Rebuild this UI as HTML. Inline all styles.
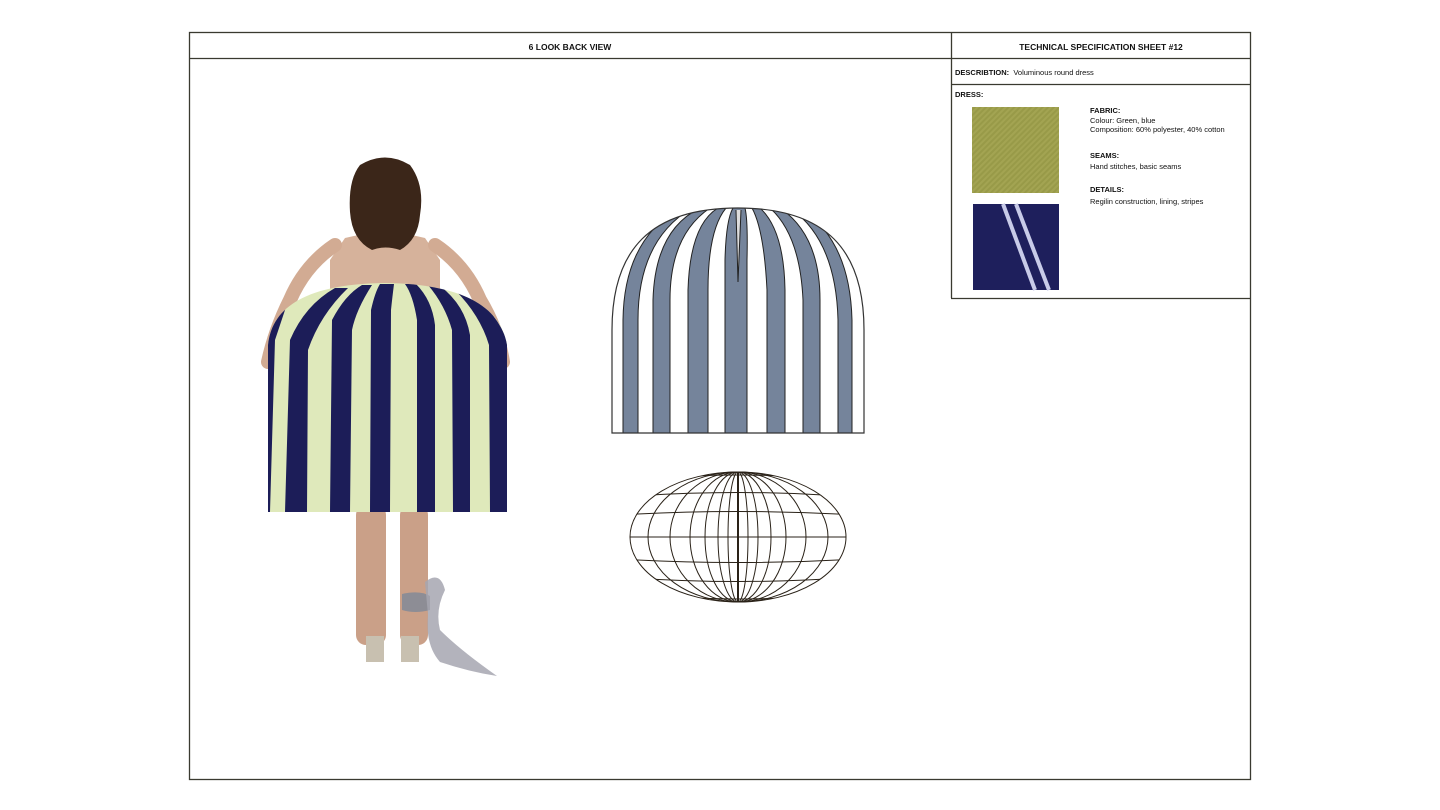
<!DOCTYPE html>
<html><head><meta charset="utf-8"><style>
html,body{margin:0;padding:0;background:#fff;width:1440px;height:810px;overflow:hidden;font-family:"Liberation Sans",Arial,sans-serif;}
.t{position:absolute;font-size:8px;color:#111;white-space:nowrap;line-height:10px}
.b{font-weight:bold}
</style></head><body>
<svg width="1440" height="810" style="position:absolute;left:0;top:0" xmlns="http://www.w3.org/2000/svg">
<defs>
<clipPath id="dome"><path d="M612,433 L612,330 C612,250 650,208 738,208 C826,208 864,250 864,330 L864,433 Z"/></clipPath>
<clipPath id="skirt"><path d="M268,512 L268,345 C272,305 310,284 385,283 C460,284 500,305 507,345 L507,512 Z"/></clipPath>
<clipPath id="ell"><ellipse cx="738" cy="537" rx="108" ry="65"/></clipPath>
<pattern id="twill" width="4" height="4" patternUnits="userSpaceOnUse" patternTransform="rotate(45)"><rect width="4" height="4" fill="#a3a452"/><rect width="2" height="4" fill="#989a48"/></pattern>
</defs>
<g fill="none" stroke="#3a3a30" stroke-width="1.3">
<rect x="189.5" y="32.5" width="1061" height="747"/>
<line x1="189" y1="58.5" x2="1251" y2="58.5"/>
<line x1="951.5" y1="32" x2="951.5" y2="298"/>
<line x1="951" y1="84.5" x2="1251" y2="84.5"/>
<line x1="951" y1="298.5" x2="1251" y2="298.5"/>
</g>
<rect x="972" y="107" width="87" height="86" fill="url(#twill)"/>
<rect x="973" y="204" width="86" height="86" fill="#1e1f5c"/>
<path d="M1003,204 L1035,290" stroke="#c8cbe8" stroke-width="4"/>
<path d="M1016,204 L1049,290" stroke="#c8cbe8" stroke-width="4"/>
<path d="M612,433 L612,330 C612,250 650,208 738,208 C826,208 864,250 864,330 L864,433 Z" fill="#fff"/>
<g clip-path="url(#dome)" fill="#75849b" stroke="#222" stroke-width="1">
<path d="M623,433 L623,320 Q624,240 680,208 L692,208 Q638,240 638,320 L638,433 Z"/>
<path d="M653,433 L653,300 Q655,230 700,208 L710,208 Q670,235 670,300 L670,433 Z"/>
<path d="M688,433 L688,290 Q690,225 718,208 L726,208 Q708,230 708,290 L708,433 Z"/>
<path d="M725,433 L725,260 Q726,220 733,208 L745,208 Q748,220 747,260 L747,433 Z"/>
<path d="M767,433 L767,290 Q764,230 752,208 L760,208 Q784,230 785,290 L785,433 Z"/>
<path d="M803,433 L803,300 Q800,235 770,208 L780,208 Q820,235 820,300 L820,433 Z"/>
<path d="M838,433 L838,320 Q836,240 790,208 L800,208 Q850,240 852,320 L852,433 Z"/>
</g>
<path d="M612,433 L612,330 C612,250 650,208 738,208 C826,208 864,250 864,330 L864,433 Z" fill="none" stroke="#333" stroke-width="1.2"/>
<path d="M736,210 L738,282 L741,210" fill="#ddd" stroke="#222" stroke-width="1"/>
<g fill="none" stroke="#2a2218" stroke-width="1">
<ellipse cx="738" cy="537" rx="108" ry="65"/>
<ellipse cx="738" cy="537" rx="90" ry="65"/>
<ellipse cx="738" cy="537" rx="68" ry="65"/>
<ellipse cx="738" cy="537" rx="48" ry="65"/>
<ellipse cx="738" cy="537" rx="33" ry="65"/>
<ellipse cx="738" cy="537" rx="20" ry="65"/>
<ellipse cx="738" cy="537" rx="10" ry="65"/>
<g clip-path="url(#ell)">
<path d="M620,482 Q738,468 856,482"/>
<path d="M620,497 Q738,488 856,497"/>
<path d="M620,515 Q738,508 856,515"/>
<path d="M620,537 L856,537"/>
<path d="M620,559 Q738,566 856,559"/>
<path d="M620,577 Q738,586 856,577"/>
<path d="M620,592 Q738,606 856,592"/>
</g>
<line x1="738" y1="472" x2="738" y2="602" stroke-width="2"/>
</g>
<!-- figure -->
<path d="M345,238 Q385,228 425,238 L440,260 L440,295 L330,295 L330,260 Z" fill="#d6b29b"/>
<path d="M335,245 Q305,265 290,300 Q275,330 268,362" stroke="#d2ab93" stroke-width="14" fill="none" stroke-linecap="round"/>
<path d="M435,245 Q465,265 480,300 Q498,330 503,362" stroke="#d2ab93" stroke-width="14" fill="none" stroke-linecap="round"/>
<rect x="356" y="505" width="30" height="140" rx="10" fill="#caa088"/>
<rect x="400" y="505" width="28" height="140" rx="10" fill="#caa088"/>
<path d="M360,165 Q385,150 410,165 Q425,185 420,215 Q418,240 400,250 Q385,245 372,250 Q352,240 350,212 Q348,180 360,165 Z" fill="#3b2619"/>
<path d="M268,512 L268,345 C272,305 310,284 385,283 C460,284 500,305 507,345 L507,512 Z" fill="#dfe9bb"/>
<g clip-path="url(#skirt)" fill="#1c1d58">
<path d="M262,512 L262,330 L290,295 L275,340 L270,512 Z"/>
<path d="M285,512 L290,340 Q305,305 335,288 L348,288 Q320,315 308,350 L307,512 Z"/>
<path d="M330,512 L332,320 Q345,295 362,285 L372,285 Q356,310 352,330 L350,512 Z"/>
<path d="M370,512 L371,310 Q375,292 380,284 L394,284 Q392,300 391,310 L390,512 Z"/>
<path d="M417,512 L417,320 Q413,295 405,284 L416,284 Q432,300 435,325 L435,512 Z"/>
<path d="M453,512 L452,330 Q445,305 428,285 L440,286 Q465,305 470,335 L470,512 Z"/>
<path d="M490,512 L489,345 Q480,315 455,290 L468,292 Q500,315 508,345 L508,512 Z"/>
</g>
<path d="M402,594 Q420,590 430,596 L430,610 Q415,614 402,610 Z" fill="#8d8d95"/>
<path d="M425,582 Q440,570 445,590 Q435,610 440,630 Q460,650 497,676 Q470,672 440,662 Q425,645 428,615 Z" fill="#a6a6b0" opacity="0.85"/>
<rect x="366" y="636" width="18" height="26" fill="#c8c0b0"/>
<rect x="401" y="636" width="18" height="26" fill="#c8c0b0"/>
</svg>
<div class="t b" style="left:189px;width:762px;top:42px;text-align:center;font-size:8.5px">6 LOOK BACK VIEW</div>
<div class="t b" style="left:951px;width:300px;top:42px;text-align:center;font-size:8.5px">TECHNICAL SPECIFICATION SHEET #12</div>
<div class="t" style="left:955px;top:68px;font-size:7.5px"><span class="b">DESCRIBTION:</span>&nbsp; Voluminous round dress</div>
<div class="t b" style="left:955px;top:90px;font-size:7.5px">DRESS:</div>
<div class="t" style="left:1090px;top:106px;font-size:7.5px;line-height:9.5px"><span class="b">FABRIC:</span><br>Colour: Green, blue<br>Composition: 60% polyester, 40% cotton</div>
<div class="t" style="left:1090px;top:150px;font-size:7.5px;line-height:11px"><span class="b">SEAMS:</span><br>Hand stitches, basic seams</div>
<div class="t" style="left:1090px;top:184px;font-size:7.5px;line-height:12px"><span class="b">DETAILS:</span><br>Regilin construction, lining, stripes</div>
</body></html>
